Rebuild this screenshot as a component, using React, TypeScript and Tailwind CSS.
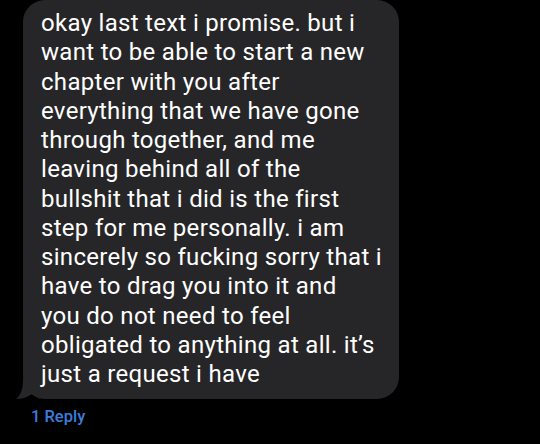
import React from "react";

const lines = [
  "okay last text i promise. but i",
  "want to be able to start a new",
  "chapter with you after",
  "everything that we have gone",
  "through together, and me",
  "leaving behind all of the",
  "bullshit that i did is the first",
  "step for me personally. i am",
  "sincerely so fucking sorry that i",
  "have to drag you into it and",
  "you do not need to feel",
  "obligated to anything at all. it\u2019s",
  "just a request i have",
];

export default function App() {
  return (
    <div className="w-[540px] h-[444px] bg-black overflow-hidden" style={{ fontFamily: "Roboto, 'Noto Sans', sans-serif" }}>
      <div className="pl-[23px]">
        <div className="relative w-[376px] h-[399px] bg-[#262628] rounded-[22px] pl-[18px] pt-[9px]">
          <svg className="absolute left-[-7px] bottom-0" width="24" height="20" viewBox="0 0 24 20">
            <path d="M7 0 C7 10 5 16 0 20 C6 20 12 18 16 15 L24 20 L24 0 Z" fill="#262628" />
          </svg>
          <div className="relative text-white text-[24px] leading-[29.25px] tracking-[0.3px] whitespace-nowrap">
            {lines.map((l, i) => (
              <div key={i}>{l}</div>
            ))}
          </div>
        </div>
      </div>
      <div className="pl-[31px] mt-[8px] text-[16.5px] leading-[20px] font-medium text-[#3b7ddd]">1 Reply</div>
    </div>
  );
}
